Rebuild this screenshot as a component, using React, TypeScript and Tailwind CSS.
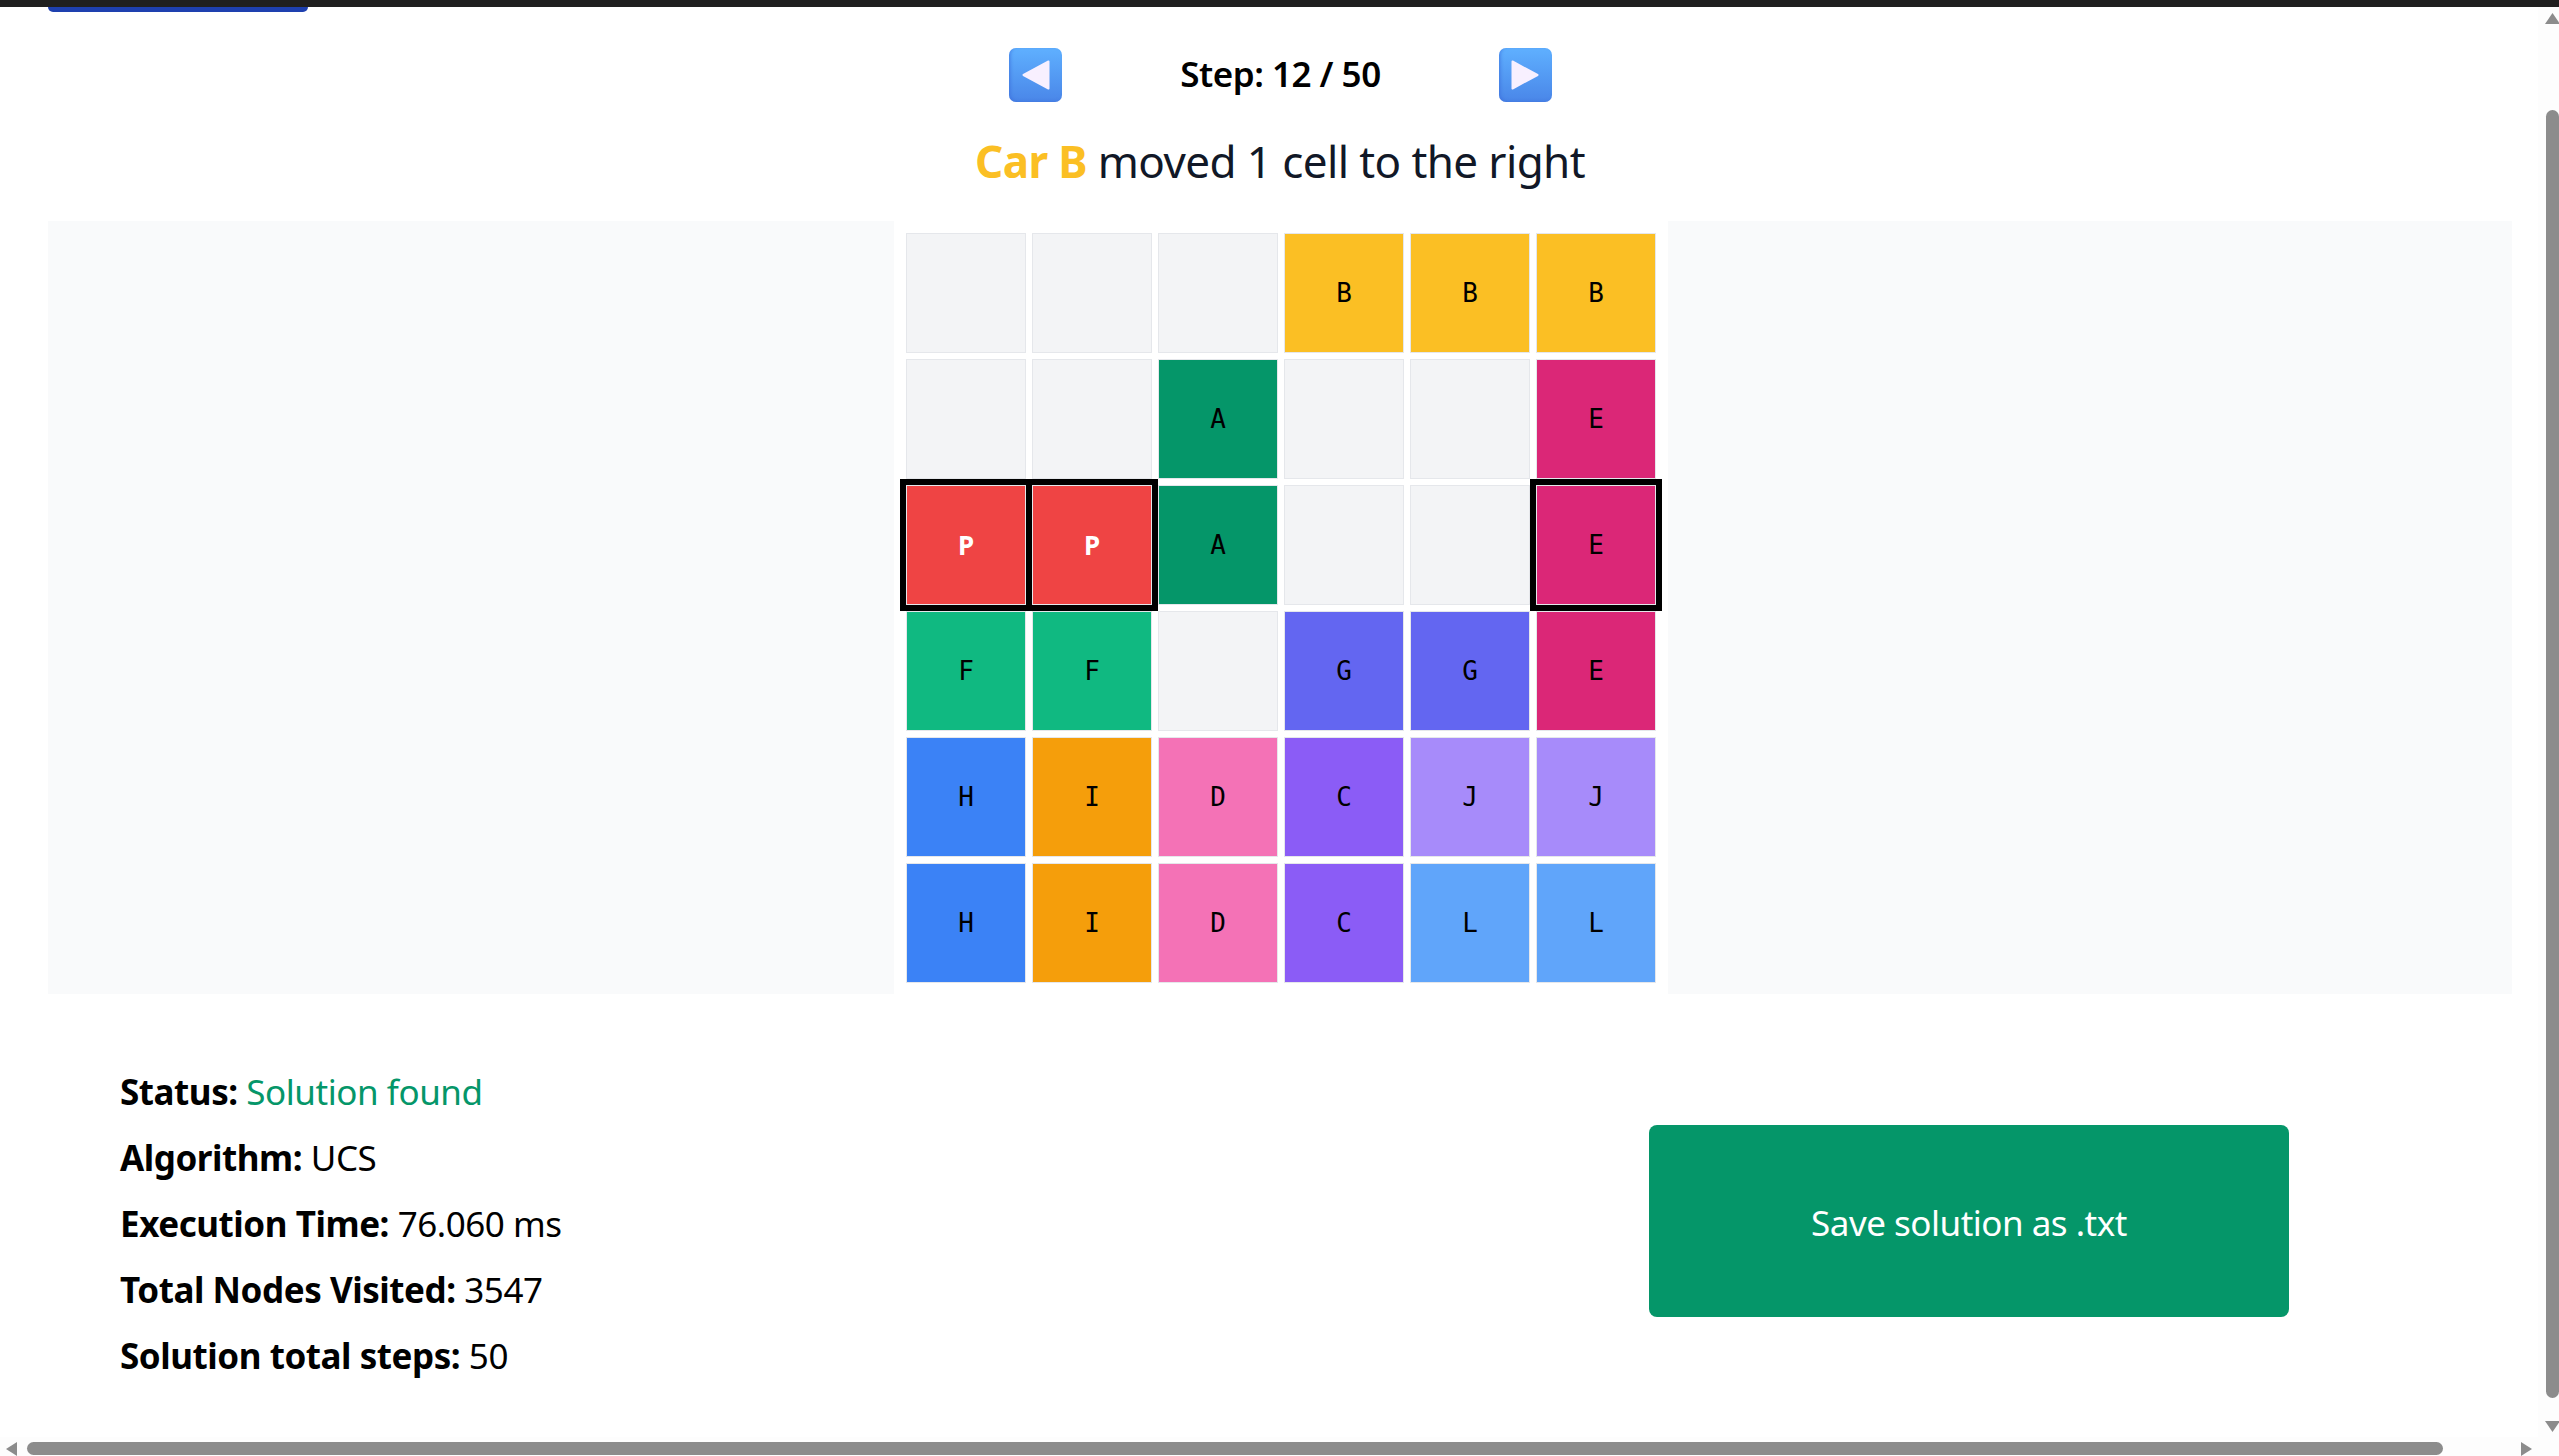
const FONT = "font-['Noto_Sans',sans-serif]";

type Cell = { label?: string; color?: string; exit?: boolean; light?: boolean };

const e: Cell = {};
const B: Cell = { label: "B", color: "bg-[#fbbf24]" };
const A: Cell = { label: "A", color: "bg-[#059669]" };
const E: Cell = { label: "E", color: "bg-[#db2777]" };
const P: Cell = { label: "P", color: "bg-[#ef4444]", light: true };
const F: Cell = { label: "F", color: "bg-[#10b981]" };
const G: Cell = { label: "G", color: "bg-[#6366f1]" };
const H: Cell = { label: "H", color: "bg-[#3b82f6]" };
const I: Cell = { label: "I", color: "bg-[#f59e0b]" };
const D: Cell = { label: "D", color: "bg-[#f472b6]" };
const C: Cell = { label: "C", color: "bg-[#8b5cf6]" };
const J: Cell = { label: "J", color: "bg-[#a78bfa]" };
const L: Cell = { label: "L", color: "bg-[#60a5fa]" };

const board: Cell[] = [
  e, e, e, B, B, B,
  e, e, A, e, e, E,
  { ...P, exit: true }, { ...P, exit: true }, A, e, e, { ...E, exit: true },
  F, F, e, G, G, E,
  H, I, D, C, J, J,
  H, I, D, C, L, L,
];

function StepButton({ dir }: { dir: "left" | "right" }) {
  return (
    <button className="w-[53px] h-[54px] rounded-[7px] flex items-center justify-center bg-gradient-to-b from-[#5fb0ff] to-[#4a86e8] shadow-[inset_2px_-1px_3px_rgba(60,110,220,0.5)]">
      <svg width="30" height="32" viewBox="0 0 30 32">
        {dir === "left" ? (
          <path d="M27.5 2.5 L2.5 16 L27.5 29.5 Z" fill="#f8f0ff" stroke="#f8f0ff" strokeWidth="2" strokeLinejoin="round" />
        ) : (
          <path d="M2.5 2.5 L27.5 16 L2.5 29.5 Z" fill="#f8f0ff" stroke="#f8f0ff" strokeWidth="2" strokeLinejoin="round" />
        )}
      </svg>
    </button>
  );
}

function BoardCell({ cell }: { cell: Cell }) {
  return (
    <div
      className={`w-[120px] h-[120px] border border-[#e5e7eb] flex items-center justify-center text-[26px] ${
        cell.color ?? "bg-[#f3f4f6]"
      } ${cell.exit ? "outline-[6px] outline-black" : ""} ${
        cell.light ? `text-white font-bold ${FONT}` : "text-black font-['DejaVu_Sans_Mono',monospace]"
      }`}
    >
      {cell.label}
    </div>
  );
}

function StatLine({ label, children }: { label: string; children: React.ReactNode }) {
  return (
    <p className="h-[66px] leading-[66px]">
      <span className="font-bold">{label}</span> {children}
    </p>
  );
}

export default function App() {
  return (
    <div className={`w-full h-screen overflow-hidden bg-white flex flex-col ${FONT}`}>
      <div className="h-[7px] shrink-0 bg-[#1f1f1f]" />

      <div className="flex flex-1 min-h-0">
        <main className="flex-1 min-w-0 pl-[48px] pr-[26px]">
          <div className="h-[5px] w-[260px] rounded-b-[5px] bg-[#1e40af]" />

          <div className="mt-[36px] ml-[961px] flex items-center w-[543px] justify-between">
            <StepButton dir="left" />
            <span className="text-[35px] leading-[50px] mb-[3px] tracking-[-0.5px] font-semibold text-black">Step: 12 / 50</span>
            <StepButton dir="right" />
          </div>

          <h2 className="mt-[26px] text-center text-[44px] tracking-[-0.6px] leading-[66px] text-[#111827]">
            <span className="font-bold text-[#fbbf24]">Car B</span> moved 1 cell to the right
          </h2>

          <div className="mt-[27px] flex">
            <div className="w-[846px] shrink-0 bg-[#f9fafb]" />
            <div className="px-[12px] pt-[12px] pb-[11px]">
              <div className="grid grid-cols-6 gap-[6px]">
                {board.map((cell, i) => (
                  <BoardCell key={i} cell={cell} />
                ))}
              </div>
            </div>
            <div className="flex-1 bg-[#f9fafb]" />
          </div>

          <div className="mt-[65px] flex items-start">
            <div className="pl-[72px] text-[35px] tracking-[-0.45px] text-black w-[1601px]">
              <StatLine label="Status:">
                <span className="text-[#059669]">Solution found</span>
              </StatLine>
              <StatLine label="Algorithm:">UCS</StatLine>
              <StatLine label="Execution Time:">76.060 ms</StatLine>
              <StatLine label="Total Nodes Visited:">3547</StatLine>
              <StatLine label="Solution total steps:">50</StatLine>
            </div>
            <button className="mt-[66px] pt-[4px] w-[640px] h-[192px] rounded-[8px] bg-[#059669] text-white text-[35px] tracking-[-0.5px]">
              Save solution as .txt
            </button>
          </div>
        </main>

        <div className="w-[21px] shrink-0 bg-[#fdfdfd] flex flex-col items-center pt-[6px] pl-[7px]">
          <svg width="15" height="11" viewBox="0 0 15 11" className="shrink-0">
            <path d="M7.5 0 L15 11 H0 Z" fill="#8c8c8c" />
          </svg>
          <div className="mt-[86px] h-[1288px] w-[13px] shrink-0 rounded-full bg-[#8c8c8c]" />
          <svg width="15" height="11" viewBox="0 0 15 11" className="mt-[23px] shrink-0">
            <path d="M0 0 H15 L7.5 11 Z" fill="#8c8c8c" />
          </svg>
        </div>
      </div>

      <div className="h-[19px] shrink-0 bg-[#fdfdfd] flex items-start pt-[5px] pl-[6px]">
        <svg width="11" height="14" viewBox="0 0 11 14" className="shrink-0">
          <path d="M11 0 V14 L0 7 Z" fill="#8c8c8c" />
        </svg>
        <div className="ml-[10px] h-[13px] w-[2416px] shrink-0 rounded-full bg-[#8c8c8c]" />
        <svg width="11" height="14" viewBox="0 0 11 14" className="ml-[78px] shrink-0">
          <path d="M0 0 V14 L11 7 Z" fill="#8c8c8c" />
        </svg>
      </div>
    </div>
  );
}
